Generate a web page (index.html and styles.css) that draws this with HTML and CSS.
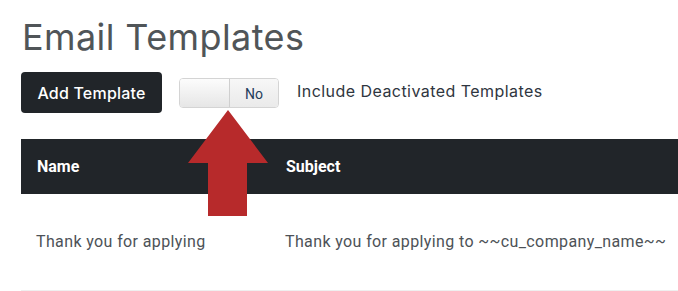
FILE: index.html
```html
<!DOCTYPE html>
<html lang="en">
<head>
    <meta charset="UTF-8">
    <title>Email Templates</title>
    <link rel="stylesheet" href="styles.css">
</head>
<body>
    <div class="page">
        <h1 class="page-title">Email Templates</h1>

        <div class="toolbar">
            <button class="btn-add">Add Template</button>
            <div class="toggle">
                <span class="toggle-knob"></span>
                <span class="toggle-state">No</span>
            </div>
            <span class="toggle-label">Include Deactivated Templates</span>
        </div>

        <table class="templates">
            <thead>
                <tr>
                    <th class="col-name">Name</th>
                    <th>Subject</th>
                </tr>
            </thead>
            <tbody>
                <tr>
                    <td class="col-name">Thank you for applying</td>
                    <td>Thank you for applying to ~~cu_company_name~~</td>
                </tr>
            </tbody>
        </table>

        <!-- flèche d'annotation -->
        <svg class="arrow" width="82" height="106" viewBox="0 0 82 106">
            <polygon points="41,0 81,53 60,53 60,106 21,106 21,53 1,53" fill="#b72a2b"/>
        </svg>
    </div>
</body>
</html>
```

FILE: styles.css
```css
* {
    margin: 0;
    padding: 0;
    box-sizing: border-box;
}

body {
    font-family: 'Roboto', 'Liberation Sans', sans-serif;
    background: #fff;
    overflow: hidden;
}

.page {
    position: relative;
    padding: 15px 0 0 21px;
    width: 700px;
}

.page-title {
    font-family: 'Inter', 'Roboto', sans-serif;
    font-weight: 400;
    font-size: 36px;
    color: #505558;
    line-height: 44px;
    padding-left: 1px;
    letter-spacing: 0.4px;
}

.toolbar {
    display: flex;
    align-items: center;
    margin-top: 13px;
    height: 41px;
}

.btn-add {
    background: #212529;
    color: #fff;
    border: none;
    border-radius: 4px;
    height: 41px;
    width: 141px;
    font-family: 'Inter', 'Roboto', sans-serif;
    font-size: 16px;
    font-weight: 500;
    letter-spacing: 0.2px;
}

.toggle {
    display: flex;
    margin-left: 17px;
    width: 100px;
    height: 30px;
    border: 1px solid #d4d4d4;
    border-radius: 4px;
    overflow: hidden;
}

.toggle-knob {
    width: 50px;
    background: linear-gradient(#fcfcfc, #e6e6e6);
    border-right: 1px solid #cfcfcf;
}

.toggle-state {
    flex: 1;
    background: linear-gradient(#f7f7f7, #eaeaea);
    color: #1f3d5c;
    font-size: 14px;
    display: flex;
    align-items: center;
    justify-content: center;
    padding-top: 2px;
}

.toggle-label {
    margin-left: 18px;
    margin-bottom: 3px;
    font-family: 'Inter', 'Roboto', sans-serif;
    font-size: 16px;
    color: #2f3640;
    letter-spacing: 0.45px;
}

.templates {
    margin-top: 26px;
    border-collapse: collapse;
    width: 679px;
    text-align: left;
}

.templates th {
    background: #212529;
    color: #fff;
    font-size: 16px;
    font-weight: 700;
    height: 55px;
    padding: 0 0 0 16px;
}

.templates td {
    height: 96px;
    font-size: 16px;
    color: #4d5257;
    padding: 0 0 0 15px;
    border-bottom: 1px solid #efefef;
    letter-spacing: 0.38px;
}

.templates .col-name {
    width: 249px;
}

.arrow {
    position: absolute;
    left: 187px;
    top: 110px;
}
```
